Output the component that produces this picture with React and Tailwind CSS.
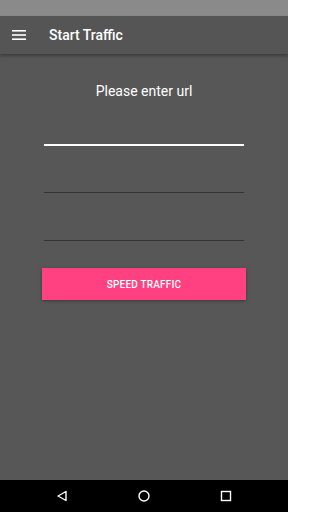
import React from 'react';

export default function App() {
    return (
        <div className="w-[288px] h-[512px] flex flex-col bg-[#575757] font-['Roboto',sans-serif] overflow-hidden">
            {/* status bar */}
            <div className="h-[16px] bg-[#8a8a8a]" />

            {/* toolbar */}
            <div className="h-[38px] bg-[#555555] flex items-center shadow-[0_2px_3px_rgba(0,0,0,0.3)] z-10">
                <svg className="ml-[12px]" width="14" height="10" viewBox="0 0 14 10">
                    <rect x="0" y="0" width="14" height="1.6" fill="#fff" />
                    <rect x="0" y="4.2" width="14" height="1.6" fill="#fff" />
                    <rect x="0" y="8.4" width="14" height="1.6" fill="#fff" />
                </svg>
                <span className="ml-[23px] text-white text-[14px] font-medium">Start Traffic</span>
            </div>

            {/* content */}
            <div className="flex-1 flex flex-col items-center">
                <div className="mt-[27px] text-white text-[14px] leading-[20px]">Please enter url</div>
                <div className="mt-[43px] w-[200px] h-[2px] bg-white" />
                <div className="mt-[46px] w-[200px] h-[1px] bg-[#333333]" />
                <div className="mt-[47px] w-[200px] h-[1px] bg-[#333333]" />
                <button className="mt-[27px] w-[204px] h-[32px] bg-[#ff4081] text-white text-[10px] font-medium tracking-[0.2px] shadow-[0_1px_3px_rgba(0,0,0,0.35)]">
                    SPEED TRAFFIC
                </button>
            </div>

            {/* nav bar */}
            <div className="h-[32px] bg-black flex items-center justify-center gap-[70px]">
                <svg width="12" height="12" viewBox="0 0 12 12">
                    <path d="M10 1.5 L2 6 L10 10.5 Z" fill="none" stroke="#fff" strokeWidth="1.4" strokeLinejoin="round" />
                </svg>
                <svg width="12" height="12" viewBox="0 0 12 12">
                    <circle cx="6" cy="6" r="5" fill="none" stroke="#fff" strokeWidth="1.4" />
                </svg>
                <svg width="12" height="12" viewBox="0 0 12 12">
                    <rect x="1.5" y="1.5" width="9" height="9" fill="none" stroke="#fff" strokeWidth="1.4" />
                </svg>
            </div>
        </div>
    );
}
